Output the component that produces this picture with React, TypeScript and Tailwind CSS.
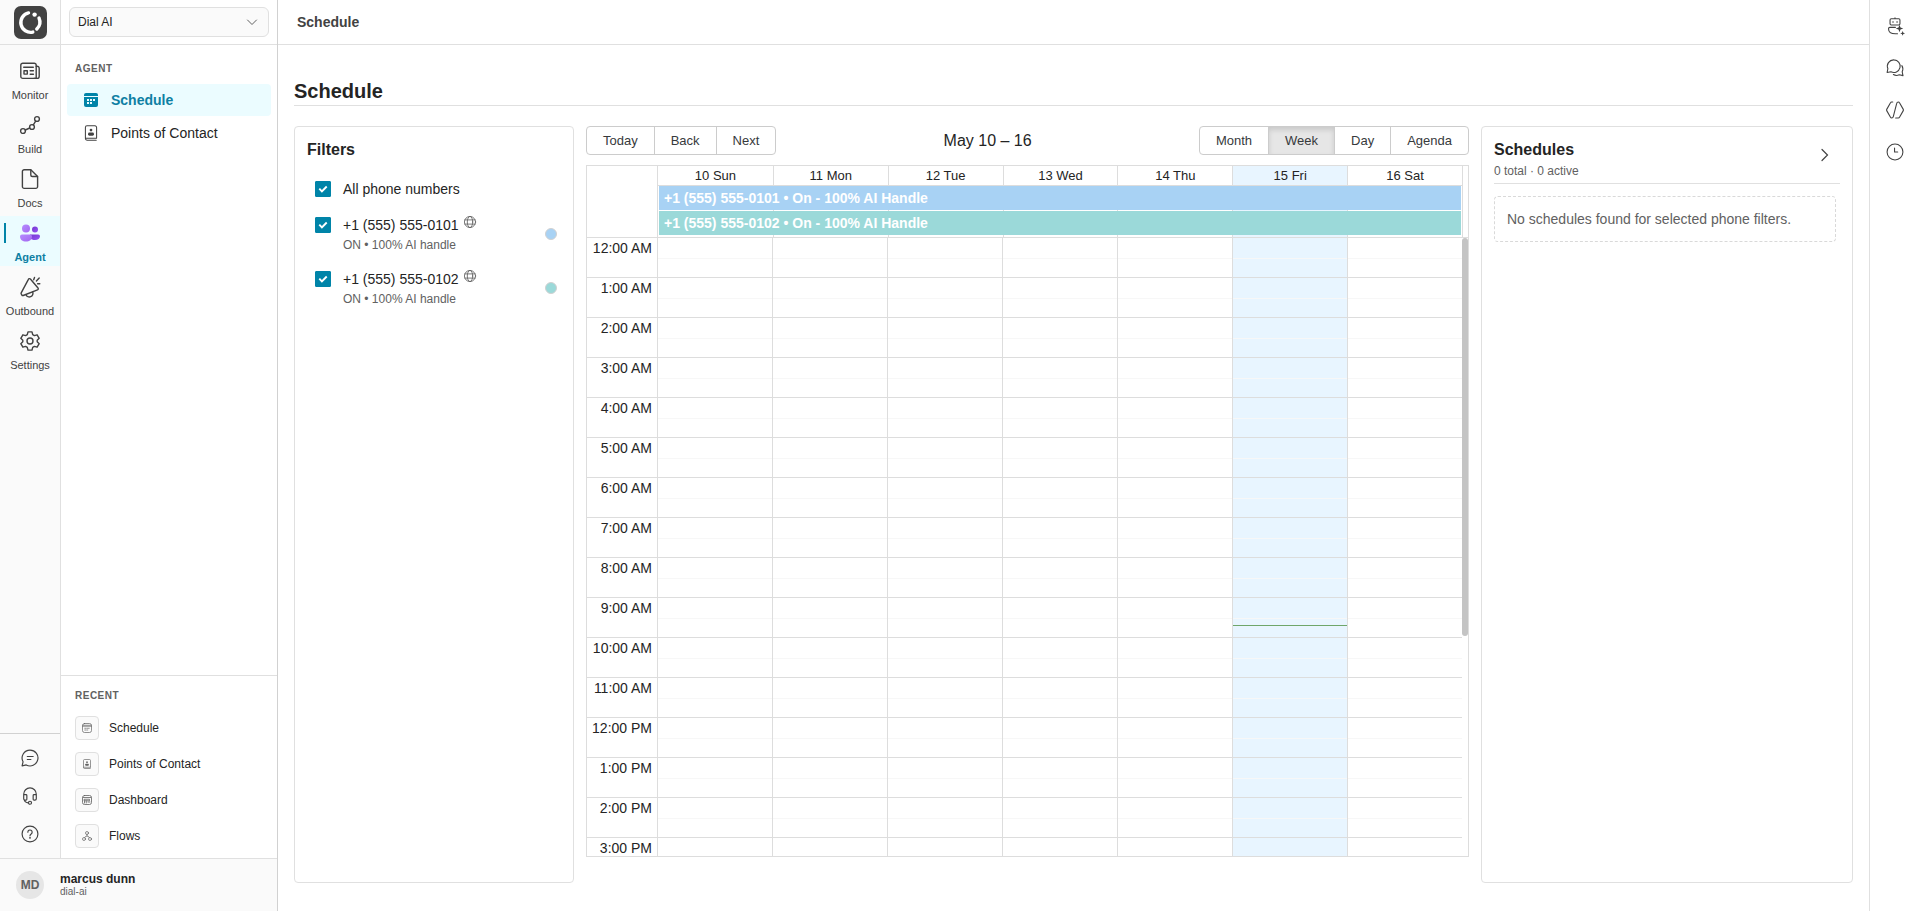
import { useState } from 'react';
import type { ReactNode } from 'react';

type IconProps = { className?: string };

function Svg({ className = 'size-5', children, width = 1.4 }: IconProps & { children: ReactNode; width?: number }) {
  return (
    <svg
      viewBox="0 0 20 20"
      className={className}
      fill="none"
      stroke="currentColor"
      strokeWidth={width}
      strokeLinecap="round"
      strokeLinejoin="round"
      overflow="visible"
      aria-hidden="true"
    >
      {children}
    </svg>
  );
}

const Logo = () => (
  <svg viewBox="0 0 33 33" className="size-[33px]" aria-hidden="true">
    <rect width="33" height="33" rx="7" fill="#424242" />
    <g fill="none" stroke="#fff" strokeLinecap="round">
      <path d="M14.500 6.900a9.700 9.700 0 0 0 4.300 19.200" strokeWidth="3.400" />
      <path d="M25 12a9.800 9.800 0 0 1-2.200 11" strokeWidth="3.400" />
    </g>
    <circle cx="20.600" cy="8.600" r="2.200" fill="#fff" />
  </svg>
);

const MonitorIcon = () => (
  <Svg>
    <path d="M.8 4.200a2 2 0 0 1 2-2h11.400a2 2 0 0 1 2 2v13.200H2.800a2 2 0 0 1-2-2z" />
    <path d="M16.200 5.200h.8a2.200 2.200 0 0 1 2.200 2.200v7.800a2.200 2.200 0 0 1-2.200 2.200h-3" />
    <path d="M3.700 6.200h9.600M10.200 9.700h3.200M10.200 13.200h3.200M4 9.700h3.300v3.400H4z" />
  </Svg>
);

const BuildIcon = () => (
  <Svg>
    <circle cx="3" cy="16" r="2.400" />
    <circle cx="12" cy="12" r="2.400" />
    <circle cx="17" cy="4" r="2.400" />
    <path d="M5.300 15l4.400-2M13.300 9.900l2.400-3.800" />
  </Svg>
);

const DocsIcon = () => (
  <Svg>
    <path d="M4.200.8h6.600l6.800 6.600v10.200a1.800 1.800 0 0 1-1.800 1.800H4.200a1.800 1.800 0 0 1-1.800-1.800v-15A1.800 1.800 0 0 1 4.200.8z" />
    <path d="M10.800 1v5a1.500 1.500 0 0 0 1.500 1.500h5.200" />
  </Svg>
);

const AgentIcon = () => (
  <svg viewBox="0 0 20 20" className="size-5" aria-hidden="true">
    <defs>
      <linearGradient id="agent-light" x1="0" y1="0" x2="1" y2="1">
        <stop offset="0" stopColor="#b58cff" />
        <stop offset="1" stopColor="#a366f0" />
      </linearGradient>
      <linearGradient id="agent-dark" x1="0" y1="0" x2="1" y2="1">
        <stop offset="0" stopColor="#7436cf" />
        <stop offset="1" stopColor="#9655f5" />
      </linearGradient>
    </defs>
    <circle cx="15" cy="6.500" r="3" fill="url(#agent-dark)" />
    <path d="M10 11.500h8.200a1.800 1.800 0 0 1 1.800 1.800c0 2.300-2 3.700-5 3.700-2 0-4-.6-5-2z" fill="url(#agent-dark)" />
    <circle cx="6" cy="5.500" r="4" fill="url(#agent-light)" />
    <path d="M2 11.500h8a2 2 0 0 1 2 2c0 3-2.500 5-6 5s-6-2-6-5a2 2 0 0 1 2-2z" fill="url(#agent-light)" />
  </svg>
);

const OutboundIcon = () => (
  <Svg>
    <path d="M8.400 2.300a1.200 1.200 0 0 1 2-.3l7.600 9a1.200 1.200 0 0 1-.5 1.900L3.200 18.500a1.300 1.300 0 0 1-1.400-.5l-.5-.8a1.300 1.300 0 0 1-.1-1.300z" />
    <path d="M6 17.700a3.500 3.500 0 0 0 6.700-2.700M13.700 2.800l.8-2.300M16.400 4l2.800-3M17.600 6.800h2.200" />
  </Svg>
);

const SettingsIcon = () => (
  <Svg>
    <path d="M8 .9h4l.7 2.700 1.700 1 2.700-.8 2.100 3.500-2 1.900v1.600l2 1.900-2.100 3.500-2.700-.8-1.700 1-.7 2.700H8l-.7-2.700-1.700-1-2.700.8-2.100-3.500 2-1.900V9.200l-2-1.900 2.100-3.500 2.700.8 1.700-1z" />
    <circle cx="10" cy="10" r="3" />
  </Svg>
);

const FeedbackIcon = () => (
  <Svg className="size-[18px]" width={1.300}>
    <path d="M10 1.200a8.800 8.800 0 1 1-4.200 16.500L1.200 18.800l1.100-4.600A8.800 8.800 0 0 1 10 1.200zM7 8.300h6.500M7 11.700h4" />
  </Svg>
);

const SupportIcon = () => (
  <Svg className="size-[18px]" width={1.300}>
    <path d="M3 13V8a7 7 0 0 1 14 0v5M3 8.500h2.500a1 1 0 0 1 1 1v4a1 1 0 0 1-1 1h-1A1.500 1.500 0 0 1 3 13M17 8.500h-2.500a1 1 0 0 0-1 1v4a1 1 0 0 0 1 1h1A1.500 1.500 0 0 0 17 13M3.400 13.800c.6 2.300 2 3.700 4.600 3.800" />
    <circle cx="10" cy="17.500" r="1.700" />
  </Svg>
);

const HelpIcon = () => (
  <Svg className="size-[18px]" width={1.300}>
    <circle cx="10" cy="10" r="8.800" />
    <path d="M7.600 8a2.400 2.400 0 1 1 3.700 2c-.9.600-1.300 1-1.300 2" />
    <circle cx="10" cy="14.300" r=".4" fill="currentColor" />
  </Svg>
);

const CalendarFilled = () => (
  <svg viewBox="-1 -1 16 16" className="size-4" fill="#0084a8" aria-hidden="true">
    <path d="M0 3V2a2 2 0 0 1 2-2h10a2 2 0 0 1 2 2v1z" />
    <path d="M0 4h14v8a2 2 0 0 1-2 2H2a2 2 0 0 1-2-2z" />
    <path d="M3 6h2v2H3zM6 6h2v2H6zM9 6h2v2H9zM3 9h2v2H3zM6 9h2v2H6z" fill="#ebfcff" />
  </svg>
);

const CalendarIcon = ({ className }: IconProps) => (
  <Svg className={className} width={1.400}>
    <rect x="1" y="1" width="18" height="18" rx="4" />
    <path d="M1.500 4.500h17M1.500 6.500h17M5.500 10.500h2M9.500 10.500h5M5.500 14h2M9.500 14h2" />
  </Svg>
);

const ContactIcon = ({ className }: IconProps) => (
  <Svg className={className} width={1.300}>
    <path d="M17 16V3a2 2 0 0 0-2-2H5a2 2 0 0 0-2 2v14a2 2 0 0 0 2 2h11.500M3.200 16.500H17" />
    <circle cx="10" cy="6.300" r="1.700" fill="currentColor" stroke="none" />
    <rect x="6.300" y="9.500" width="7.400" height="3.800" rx="1.700" fill="currentColor" stroke="none" />
  </Svg>
);

const DashboardIcon = ({ className }: IconProps) => (
  <Svg className={className} width={1.600}>
    <rect x="1" y="1" width="18" height="18" rx="4" />
    <path d="M2 5h16M5 8.500h10v3H5zM5 12v4M8.500 12v4M12 14h4" />
  </Svg>
);

const FlowsIcon = ({ className }: IconProps) => (
  <Svg className={className} width={1.400}>
    <circle cx="10" cy="4" r="3" />
    <circle cx="4" cy="16" r="3" />
    <circle cx="16" cy="16" r="3" />
    <path d="M10 7v3M5.500 13.300L7 11l3-1 3 1 1.500 2.300" />
  </Svg>
);

const GlobeIcon = () => (
  <Svg className="size-3" width={1.400}>
    <circle cx="10" cy="10" r="9.300" />
    <ellipse cx="10" cy="10" rx="4.500" ry="9.300" />
    <path d="M1.500 6.500h17M1.500 13.500h17" />
  </Svg>
);

const ChevronDown = () => (
  <svg viewBox="0 0 12 12" className="size-3" fill="none" stroke="#616161" strokeLinecap="round" aria-hidden="true">
    <path d="M1.500 4L6 8.500 10.500 4" />
  </svg>
);

const ChevronRight = () => (
  <svg viewBox="0 0 14 14" className="size-3.5" fill="none" stroke="#424242" strokeWidth="1.200" strokeLinecap="round" aria-hidden="true">
    <path d="M4 1.500L9.500 7 4 12.500" />
  </svg>
);

const BotIcon = () => (
  <Svg className="size-[18px]" width={1.200}>
    <path d="M4.500 3.300A1.300 1.300 0 0 1 5.800 2h8.400a1.300 1.300 0 0 1 1.300 1.300v4.200a1.300 1.300 0 0 1-1.300 1.300H5.800a1.300 1.300 0 0 1-1.300-1.300zM10 .8V2" />
    <path d="M10.500 11.500H4.300A1.500 1.500 0 0 0 2.800 13c0 3.200 2.700 5.700 7.700 5.700h2.300" />
    <circle cx="7.800" cy="5.500" r=".9" fill="currentColor" stroke="none" />
    <circle cx="12.300" cy="5.500" r=".9" fill="currentColor" stroke="none" />
    <path d="M15 8.600l1.100 3.100 3.100 1.100-3.100 1.100-1.100 3.100-1.100-3.100-3.100-1.100 3.100-1.100zM18.500 15.500l.8 1.900 1.900.8-1.900.8-.8 1.900-.8-1.900-1.900-.8 1.900-.8z" fill="currentColor" stroke="none" />
  </Svg>
);

const ChatIcon = () => (
  <Svg className="size-[18px]" width={1.200}>
    <path d="M8.800 1a7 7 0 1 1-3.300 13.200L1.200 15l.9-4.200A7 7 0 0 1 8.800 1z" />
    <path d="M17.600 7.400a7 7 0 0 1 .4 6.800l.9 4.300-4.200-.9a7 7 0 0 1-6.500-.3" />
  </Svg>
);

const CodeIcon = () => (
  <Svg className="size-[18px]" width={1.200}>
    <path d="M7.500 1.200H6.300a1.500 1.500 0 0 0-1.300.8L.8 9.300a1.500 1.500 0 0 0 0 1.400L5 18a1.500 1.500 0 0 0 1.300.8c1 0 1.600-.5 1.800-1.500l3.800-14.600c.2-1 .8-1.500 1.800-1.500A1.500 1.500 0 0 1 15 2l4.200 7.300a1.500 1.500 0 0 1 0 1.400L15 18a1.500 1.500 0 0 1-1.300.8h-3" />
  </Svg>
);

const ClockIcon = () => (
  <Svg className="size-[18px]" width={1.200}>
    <circle cx="10" cy="10" r="8.800" />
    <path d="M9.500 5.500V10h3.500" />
  </Svg>
);

const railItems = [
  { label: 'Monitor', icon: <MonitorIcon /> },
  { label: 'Build', icon: <BuildIcon /> },
  { label: 'Docs', icon: <DocsIcon /> },
  { label: 'Agent', icon: <AgentIcon />, active: true },
  { label: 'Outbound', icon: <OutboundIcon /> },
  { label: 'Settings', icon: <SettingsIcon /> },
];

const recentItems = [
  { label: 'Schedule', icon: <CalendarIcon className="size-2.5" /> },
  { label: 'Points of Contact', icon: <ContactIcon className="size-2.5" /> },
  { label: 'Dashboard', icon: <DashboardIcon className="size-2.5" /> },
  { label: 'Flows', icon: <FlowsIcon className="size-2.5" /> },
];

const phones = [
  { id: 'p1', number: '+1 (555) 555-0101', dot: 'bg-[#a8d2f4]' },
  { id: 'p2', number: '+1 (555) 555-0102', dot: 'bg-[#9bd9d9]' },
];

const days = ['10 Sun', '11 Mon', '12 Tue', '13 Wed', '14 Thu', '15 Fri', '16 Sat'];
const TODAY = 5;
const views = ['Month', 'Week', 'Day', 'Agenda'];
const hours = Array.from({ length: 24 }, (_, h) => `${h % 12 === 0 ? 12 : h % 12}:00 ${h < 12 ? 'AM' : 'PM'}`);

function Rail() {
  return (
    <nav aria-label="Main" className="flex w-[61px] shrink-0 flex-col border-r border-[#e0e0e0] bg-[#fafafa]">
      <a href="#home" aria-label="Home" className="flex h-[45px] shrink-0 items-center justify-center border-b border-[#e0e0e0]">
        <Logo />
      </a>
      <div className="flex flex-1 flex-col gap-1 pt-[9px]">
        {railItems.map(item => (
          <a
            key={item.label}
            href={`#${item.label.toLowerCase()}`}
            className={`relative flex h-[50px] flex-col items-center gap-[7px] pt-[7px] text-[11px] leading-[14px] ${
              item.active ? 'bg-[#ebfcff] font-bold text-[#0e7fa3]' : 'text-[#424242]'
            }`}
          >
            {item.active && <span className="absolute top-[7px] left-1 h-5 w-0.5 bg-[#0084a8]" />}
            {item.icon}
            {item.label}
          </a>
        ))}
      </div>
      <div className="flex h-[125px] flex-col items-center gap-5 border-t border-[#d1d1d1] pt-[15px] text-[#424242]">
        <button type="button" aria-label="Feedback"><FeedbackIcon /></button>
        <button type="button" aria-label="Support"><SupportIcon /></button>
        <button type="button" aria-label="Help"><HelpIcon /></button>
      </div>
    </nav>
  );
}

function Sidebar() {
  return (
    <div className="flex min-w-0 flex-1 flex-col">
      <div className="relative flex h-[45px] shrink-0 items-center border-b border-[#e0e0e0] px-2">
        <select
          aria-label="Project"
          className="h-[30px] w-full appearance-none rounded-md border border-[#e0e0e0] bg-[#fafafa] px-2 text-xs text-[#242424]"
        >
          <option>Dial AI</option>
        </select>
        <span className="pointer-events-none absolute right-[19px]">
          <ChevronDown />
        </span>
      </div>
      <div className="flex-1 px-1.5 pt-4">
        <h2 className="px-2 text-[10px] leading-4 font-bold tracking-wider text-[#616161]">AGENT</h2>
        <a href="#schedule" className="mt-[7px] flex h-8 items-center gap-3 rounded bg-[#ebfcff] px-4 text-sm font-bold text-[#0e7fa3]">
          <CalendarFilled />
          Schedule
        </a>
        <a href="#contacts" className="mt-px flex h-8 items-center gap-3 px-4 text-sm text-[#242424]">
          <ContactIcon className="size-4 text-[#424242]" />
          Points of Contact
        </a>
      </div>
      <div className="flex h-[183px] flex-col border-t border-[#e0e0e0] px-3.5 pt-3">
        <h2 className="text-[10px] leading-4 font-bold tracking-wider text-[#616161]">RECENT</h2>
        <div className="mt-3 flex flex-col gap-3">
          {recentItems.map(item => (
            <a key={item.label} href="#recent" className="flex items-center gap-2.5 text-xs text-[#242424]">
              <span className="flex size-6 items-center justify-center rounded border border-[#e0e0e0] bg-[#fafafa] text-[#616161]">
                {item.icon}
              </span>
              {item.label}
            </a>
          ))}
        </div>
      </div>
    </div>
  );
}

function Checkbox({ id, checked, onChange }: { id: string; checked: boolean; onChange: () => void }) {
  return (
    <span className="relative flex size-4 shrink-0">
      <input
        id={id}
        type="checkbox"
        checked={checked}
        onChange={onChange}
        className="size-4 appearance-none rounded-[1px] border border-[#616161] checked:border-[#0084a8] checked:bg-[#0084a8]"
      />
      {checked && (
        <svg viewBox="0 0 16 16" className="pointer-events-none absolute inset-0 size-4" fill="none" stroke="#fff" strokeWidth="1.900" aria-hidden="true">
          <path d="M4.300 7.600l2.600 2.700 4.800-4.800" />
        </svg>
      )}
    </span>
  );
}

function Filters() {
  const [selected, setSelected] = useState<string[]>(phones.map(p => p.id));
  const all = selected.length === phones.length;

  const toggle = (id: string) =>
    setSelected(prev => (prev.includes(id) ? prev.filter(p => p !== id) : [...prev, id]));

  return (
    <section className="w-[280px] shrink-0 rounded border border-[#e0e0e0] px-3 pt-3">
      <h2 className="text-base leading-[22px] font-bold text-[#242424]">Filters</h2>
      <div className="mt-5 flex gap-3 px-2">
        <Checkbox id="all" checked={all} onChange={() => setSelected(all ? [] : phones.map(p => p.id))} />
        <label htmlFor="all" className="text-sm leading-4 text-[#242424]">All phone numbers</label>
      </div>
      <ul className="mt-5 flex flex-col gap-[18px] pr-1 pl-2">
        {phones.map(phone => (
          <li key={phone.id} className="flex h-9 gap-3">
            <Checkbox id={phone.id} checked={selected.includes(phone.id)} onChange={() => toggle(phone.id)} />
            <div className="flex-1">
              <div className="flex gap-[5px]">
                <label htmlFor={phone.id} className="text-sm leading-4 text-[#242424]">{phone.number}</label>
                <span className="-mt-px text-[#616161]"><GlobeIcon /></span>
              </div>
              <p className="mt-1 text-xs leading-4 text-[#616161]">ON • 100% AI handle</p>
            </div>
            <span className={`mt-[11px] size-3 rounded-full border border-[#d1d1d1] ${phone.dot}`} />
          </li>
        ))}
      </ul>
    </section>
  );
}

const navButton =
  'border border-[#ccc] px-4 py-1.5 text-[13px] leading-[15px] text-[#373a3c] -ml-px first:ml-0 first:rounded-l last:rounded-r';

function Calendar() {
  const [view, setView] = useState('Week');

  return (
    <section className="flex min-w-0 flex-1 flex-col pb-[26px]">
      <div className="mb-2.5 flex items-center">
        <div className="flex">
          {['Today', 'Back', 'Next'].map(label => (
            <button key={label} type="button" className={navButton}>{label}</button>
          ))}
        </div>
        <span className="flex-1 text-center text-base leading-5 text-[#242424]">May 10 – 16</span>
        <div className="flex">
          {views.map(label => (
            <button
              key={label}
              type="button"
              onClick={() => setView(label)}
              className={`${navButton} ${
                view === label
                  ? 'relative border-[#adadad] bg-[#e6e6e6] shadow-[inset_0_3px_5px_rgba(0,0,0,0.125)]'
                  : ''
              }`}
            >
              {label}
            </button>
          ))}
        </div>
      </div>

      <div className="flex min-h-0 flex-1 flex-col border border-[#ddd]">
        <div className="flex shrink-0 border-b border-[#ddd]">
          <div className="w-[70px] shrink-0" />
          <div className="mr-[5px] flex-1 border-x border-[#ddd]">
            <div className="grid grid-cols-7 border-b border-[#ddd]">
              {days.map((day, i) => (
                <div
                  key={day}
                  className={`h-[19px] border-[#ddd] text-center text-[13px] leading-[19px] text-[#242424] not-first:border-l ${
                    i === TODAY ? 'bg-[#e8f5ff]' : ''
                  }`}
                >
                  {day}
                </div>
              ))}
            </div>
            <div className="relative">
              <div className="absolute inset-0 grid grid-cols-7">
                {days.map((day, i) => (
                  <div key={day} className={`border-[#ddd] not-first:border-l ${i === TODAY ? 'bg-[#e8f5ff]' : ''}`} />
                ))}
              </div>
              <div className="relative flex flex-col gap-px px-px pb-0.5 text-sm leading-6 font-bold text-white">
                <div className="bg-[#a8d2f4] px-[5px]">+1 (555) 555-0101 • On - 100% AI Handle</div>
                <div className="bg-[#9bd9d9] px-[5px]">+1 (555) 555-0102 • On - 100% AI Handle</div>
              </div>
            </div>
          </div>
        </div>

        <div className="flex min-h-0 flex-1">
          <div className="flex min-w-0 flex-1 overflow-y-auto [scrollbar-width:none]">
            <div className="w-[70px] shrink-0">
              {hours.map(hour => (
                <div key={hour} className="h-10 border-b border-[#ddd] pr-[5px] text-right text-sm leading-5 text-[#242424]">
                  {hour}
                </div>
              ))}
            </div>
            <div className="grid h-[960px] flex-1 grid-cols-7">
              {days.map((day, i) => (
                <div key={day} className={`relative border-l border-[#ddd] ${i === TODAY ? 'bg-[#e8f5ff]' : ''}`}>
                  {hours.map(hour => (
                    <div key={hour} className="h-10 border-b border-[#ddd] pt-5">
                      <div className="border-t border-[#f7f7f7]" />
                    </div>
                  ))}
                  {i === TODAY && <div className="absolute inset-x-0 top-[387px] h-px bg-[#6fa66a]" />}
                </div>
              ))}
            </div>
          </div>
          <div className="w-1.5 shrink-0">
            <div className="h-[398px] rounded-full bg-[#c4c4c4]" />
          </div>
        </div>
      </div>
    </section>
  );
}

function Schedules() {
  return (
    <section className="w-[372px] shrink-0 rounded border border-[#e0e0e0] p-3">
      <div className="flex items-center justify-between border-b border-[#e0e0e0] pb-1">
        <div>
          <h2 className="text-base leading-[22px] font-bold text-[#242424]">Schedules</h2>
          <p className="mt-0.5 text-xs leading-4 text-[#616161]">0 total · 0 active</p>
        </div>
        <button type="button" aria-label="Collapse schedules" className="mr-2 mb-2">
          <ChevronRight />
        </button>
      </div>
      <p className="mt-3 mr-1 rounded border border-dashed border-[#d9d9d9] p-3 text-sm leading-5 text-[#616161]">
        No schedules found for selected phone filters.
      </p>
    </section>
  );
}

export default function App() {
  return (
    <div className="flex h-screen bg-white font-['Liberation_Sans',Arial,sans-serif] text-[#242424]">
      <aside className="flex w-[278px] shrink-0 flex-col border-r border-[#d1d1d1]">
        <div className="flex min-h-0 flex-1">
          <Rail />
          <Sidebar />
        </div>
        <div className="flex h-[53px] shrink-0 items-center gap-4 border-t border-[#e0e0e0] bg-[#fafafa] px-4">
          <span className="flex size-7 items-center justify-center rounded-full bg-[#e6e6e6] text-xs font-bold text-[#616161]">
            MD
          </span>
          <div>
            <p className="text-xs leading-[14px] font-bold text-[#242424]">marcus dunn</p>
            <p className="text-[10px] leading-3 text-[#616161]">dial-ai</p>
          </div>
        </div>
      </aside>

      <div className="flex min-w-0 flex-1 flex-col">
        <header className="flex h-[45px] shrink-0 items-center border-b border-[#e0e0e0] px-[19px] text-sm font-bold text-[#424242]">
          Schedule
        </header>
        <main className="flex min-h-0 flex-1 flex-col px-4 pt-8 pb-7">
          <h1 className="border-b border-[#e0e0e0] text-xl leading-7 font-bold text-[#242424]">Schedule</h1>
          <div className="mt-5 flex min-h-0 flex-1 gap-3">
            <Filters />
            <Calendar />
            <Schedules />
          </div>
        </main>
      </div>

      <aside className="flex w-[51px] shrink-0 flex-col items-center gap-6 border-l border-[#e0e0e0] pt-[17px] text-[#424242]">
        <button type="button" aria-label="Assistant"><BotIcon /></button>
        <button type="button" aria-label="Chat"><ChatIcon /></button>
        <button type="button" aria-label="Developer"><CodeIcon /></button>
        <button type="button" aria-label="History"><ClockIcon /></button>
      </aside>
    </div>
  );
}
